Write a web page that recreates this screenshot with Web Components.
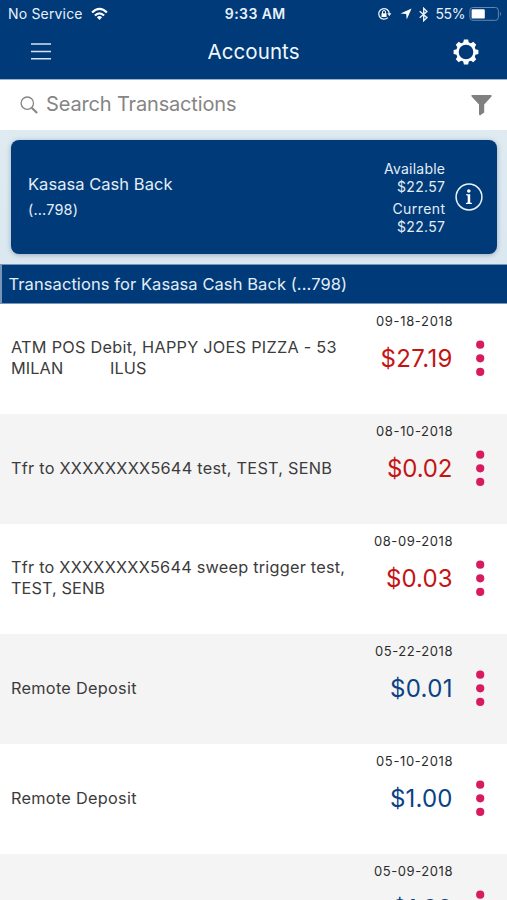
<!DOCTYPE html>
<html lang="en">
<head>
<meta charset="utf-8">
<title>Accounts</title>
<style>
  body { margin: 0; width: 507px; height: 900px; overflow: hidden; background: #fff; font-family: Inter, "Liberation Sans", sans-serif; }
</style>
</head>
<body>
<accounts-app></accounts-app>
<script>
const define = (name, html, setup) => customElements.define(name, class extends HTMLElement {
  connectedCallback() {
    if (this.shadowRoot) return;
    const t = document.createElement('template');
    t.innerHTML = (typeof html === 'function' ? html(this) : html).trim().replace(/>\s+</g, '><');
    this.attachShadow({ mode: 'open' }).append(t.content.cloneNode(true));
    if (setup) setup(this);
  }
});

// One line of text, tracked evenly so that it spans the width in its "w" attribute.
define('fit-text', `
  <style>:host{display:block;width:max-content} span{display:block;width:max-content;white-space:pre}</style>
  <span><slot></slot></span>`, el => {
  const span = el.shadowRoot.querySelector('span');
  const nodes = el.shadowRoot.querySelector('slot').assignedNodes({ flatten: true });
  const length = nodes.map(n => n.textContent).join('').length;
  const gap = (el.getAttribute('w') - span.getBoundingClientRect().width) / (length - 1);
  span.style.letterSpacing = gap + 'px';
  span.style.marginRight = -gap + 'px';
});

define('status-bar', `
  <style>
    :host{display:grid;grid-template-columns:1fr auto 1fr;align-items:center;height:28px;padding:0 5px 0 8px;font-size:14px;line-height:28px;color:#e9f1fa}
    .l,.r{display:flex;align-items:center}
    .l{gap:8px}.r{justify-content:flex-end}
    .time{font-weight:600}
    svg{display:block;flex:none}
  </style>
  <div class="l"><fit-text w="74.5">No Service</fit-text>
    <svg width="17" height="14" viewBox="0 0 17 14"><g fill="none" stroke="#fff" stroke-width="2.2"><path d="M1.1 5.5Q8.5-1.8 15.9 5.5"/><path d="M3.9 8.5Q8.5 4.1 13.1 8.5"/></g><path d="M5.9 10.2Q8.5 7.9 11.1 10.2L8.5 13Z" fill="#fff"/></svg>
  </div>
  <fit-text class="time" w="60.5">9:33 AM</fit-text>
  <div class="r">
    <svg style="margin-right:8px" width="15" height="14" viewBox="0 0 15 14"><path d="M12.3 6.8A5.3 5.3 0 1 0 10.8 10.6" fill="none" stroke="#e9f1fa" stroke-width="1.3"/><path d="M10.2 6.3h4.2l-2.1 2.9Z" fill="#e9f1fa"/><rect x="4.5" y="6.3" width="5" height="3.7" fill="#fff"/><path d="M5.5 6.7V5a1.5 1.5 0 0 1 3 0v1.7" fill="none" stroke="#fff"/></svg>
    <svg style="margin-right:7px" width="12" height="12" viewBox="0 0 12 12"><path d="M11.6.4 6.7 11.5 6.2 6 .5 5.5Z" fill="#fff"/></svg>
    <svg style="margin-right:8px" width="9" height="15" viewBox="0 0 9 15"><path d="M.7 4.3 8 10.6 4.7 13.7V1.3L8 4.4.7 10.7" fill="none" stroke="#e9f1fa" stroke-width="1.4"/></svg>
    <fit-text w="30">55%</fit-text>
    <svg style="margin-left:3.5px" width="33" height="14" viewBox="0 0 33 14"><rect x=".9" y=".5" width="28.5" height="12.8" rx="3" fill="none" stroke="#6388b0"/><rect x="2.6" y="2.2" width="13.2" height="9.4" rx="1.2" fill="#fff"/><path d="M31 4.7q2 2 0 4.4Z" fill="#6388b0"/></svg>
  </div>`);

define('nav-bar', `
  <style>
    :host{display:grid;grid-template-columns:1fr auto 1fr;align-items:center;height:48px;padding:0 28px 0 31px;color:#f2f7fc;font-size:20.5px;line-height:48px}
    svg{display:block}.gear{justify-self:end}
    fit-text{margin-left:-3px}
  </style>
  <svg width="20" height="18" viewBox="0 0 20 18"><path d="M0 1h20M0 8.6h20M0 15.7h20" stroke="#d5e2ef" stroke-width="1.5"/></svg>
  <fit-text w="92"><slot></slot></fit-text>
  <svg class="gear" width="26" height="26" viewBox="-13 -13 26 26"><defs><path id="t" d="M-3.1-8-2.1-12.4H2.1L3.1-8Z"/></defs>
    <g fill="#fff"><use href="#t"/><use href="#t" transform="rotate(45)"/><use href="#t" transform="rotate(90)"/><use href="#t" transform="rotate(135)"/><use href="#t" transform="rotate(180)"/><use href="#t" transform="rotate(225)"/><use href="#t" transform="rotate(270)"/><use href="#t" transform="rotate(315)"/></g>
    <circle r="8.6" fill="#003a78" stroke="#fff" stroke-width="2.6"/></svg>`);

define('search-bar', `
  <style>
    :host{display:flex;align-items:center;height:50px;padding:0 15.5px 0 20px;background:#fff;color:#858585;font-size:20px;line-height:48px}
    svg{display:block}fit-text{margin:-2px 0 0 7px}.f{margin-left:auto}
  </style>
  <svg width="19" height="18" viewBox="0 0 19 18"><circle cx="7.3" cy="7.2" r="6.2" fill="none" stroke="#858585" stroke-width="1.3"/><path d="m11.7 11.7 5.4 5.2" stroke="#858585" stroke-width="2.1"/></svg>
  <fit-text w="190.5"><slot></slot></fit-text>
  <svg class="f" width="21" height="22" viewBox="0 0 21 22"><path d="M1 1H20Q21 1.5 20.3 2.8L13.2 10.4V18.6L9.3 21.2Q8 21.5 8 20V10.4L.8 2.8Q-.1 1.5 1 1Z" fill="#808080"/></svg>`);

define('account-card', `
  <style>
    :host{display:flex;box-sizing:border-box;height:114px;margin:0 10px 0 11px;padding:0 14px 0 17px;border-radius:8px;background:#003a78;color:#e3edf7;box-shadow:0 1px 5px #52708e80}
    .name{padding-top:33px;font-size:16.5px;line-height:22px}
    .num{font-size:14.5px;line-height:22px;margin-top:4px}
    .bal{margin-left:auto;padding-top:20px;font-size:14px;line-height:17.5px;display:flex;flex-direction:column;align-items:flex-end}
    .cur{margin-top:5px}
    svg{display:block;margin:43px 0 0 10px}
  </style>
  <div class="name"><fit-text w="144.5">Kasasa Cash Back</fit-text><fit-text class="num" w="50">(...798)</fit-text></div>
  <div class="bal"><fit-text w="61">Available</fit-text><fit-text w="48">$22.57</fit-text><fit-text class="cur" w="52.5">Current</fit-text><fit-text w="48">$22.57</fit-text></div>
  <svg width="28" height="28" viewBox="0 0 28 28"><circle cx="14" cy="14" r="12.9" fill="none" stroke="#e9f1fa" stroke-width="1.5"/><circle cx="13.8" cy="8" r="1.8" fill="#fff"/><path d="M11 11.2h4.2v8.3l1.7.6v.9H11v-.9l1.7-.6v-6.8L11 12.1Z" fill="#fff"/></svg>`);

define('section-title', `
  <style>:host{display:block;box-sizing:border-box;height:40px;border:solid #7796b8;border-width:1px 0 1px 2px;background:#003a78;color:#e3edf7;font-size:16.5px;line-height:39px;padding-left:6.5px}</style>
  <fit-text w="338.5"><slot></slot></fit-text>`);

define('transaction-row', el => `
  <style>
    :host{display:grid;grid-template-columns:1fr auto 9px;column-gap:23px;height:110px;box-sizing:border-box;padding:0 22.5px 0 11px;background:#fff}
    :host([alt]){background:#f4f4f4}
    .desc{display:flex;flex-direction:column;justify-content:center;height:108.5px;font-size:16.3px;line-height:20.5px;color:#3c3c3c;min-width:0}
    .side{display:flex;flex-direction:column;align-items:flex-end;padding-top:8px}
    .date{font-size:13px;line-height:18px;color:#2c2c2c}
    .amt{font-size:24px;line-height:32px;margin-top:12.5px;color:${el.hasAttribute('credit') ? '#0b4285' : '#c41414'}}
    :host([two]) .desc{height:107px}
    .dots{display:block;margin-top:36px}
  </style>
  <div class="desc"><slot></slot></div>
  <div class="side"><fit-text class="date" w="${el.getAttribute('dw')}">${el.getAttribute('date')}</fit-text><fit-text class="amt" w="${el.getAttribute('aw')}">${el.getAttribute('amount')}</fit-text></div>
  <svg class="dots" width="9" height="38" viewBox="0 0 9 38"><g fill="#d81b60"><circle cx="4.2" cy="4.7" r="4.1"/><circle cx="4.2" cy="18.3" r="4.1"/><circle cx="4.2" cy="31.9" r="4.1"/></g></svg>`);

define('accounts-app', `
  <style>
    :host{display:block;height:900px;overflow:hidden}
    header{height:80px;background:#003a78;border-bottom:1px solid #9bb3cb;box-sizing:border-box;display:flex;flex-direction:column}
    section{height:134px;box-sizing:border-box;padding-top:10px;background:linear-gradient(#dfebf1,#dce8f0)}
  </style>
  <header><status-bar></status-bar><nav-bar>Accounts</nav-bar></header>
  <search-bar>Search Transactions</search-bar>
  <main>
    <section><account-card></account-card></section>
    <section-title>Transactions for Kasasa Cash Back (...798)</section-title>
    <transaction-row two date="09-18-2018" dw="76.5" amount="$27.19" aw="72"><fit-text w="325.5">ATM POS Debit, HAPPY JOES PIZZA - 53</fit-text><fit-text w="135.5">MILAN          ILUS</fit-text></transaction-row>
    <transaction-row alt date="08-10-2018" dw="76.5" amount="$0.02" aw="65.5"><fit-text w="321">Tfr to XXXXXXXX5644 test, TEST, SENB</fit-text></transaction-row>
    <transaction-row two date="08-09-2018" dw="78.5" amount="$0.03" aw="66.5"><fit-text w="334">Tfr to XXXXXXXX5644 sweep trigger test,</fit-text><fit-text w="94">TEST, SENB</fit-text></transaction-row>
    <transaction-row alt credit date="05-22-2018" dw="77.5" amount="$0.01" aw="62.5"><fit-text w="125.5">Remote Deposit</fit-text></transaction-row>
    <transaction-row credit date="05-10-2018" dw="76.5" amount="$1.00" aw="62.5"><fit-text w="125.5">Remote Deposit</fit-text></transaction-row>
    <transaction-row alt credit date="05-09-2018" dw="78.5" amount="$1.00" aw="60.5"></transaction-row>
  </main>`);
</script>
</body>
</html>
